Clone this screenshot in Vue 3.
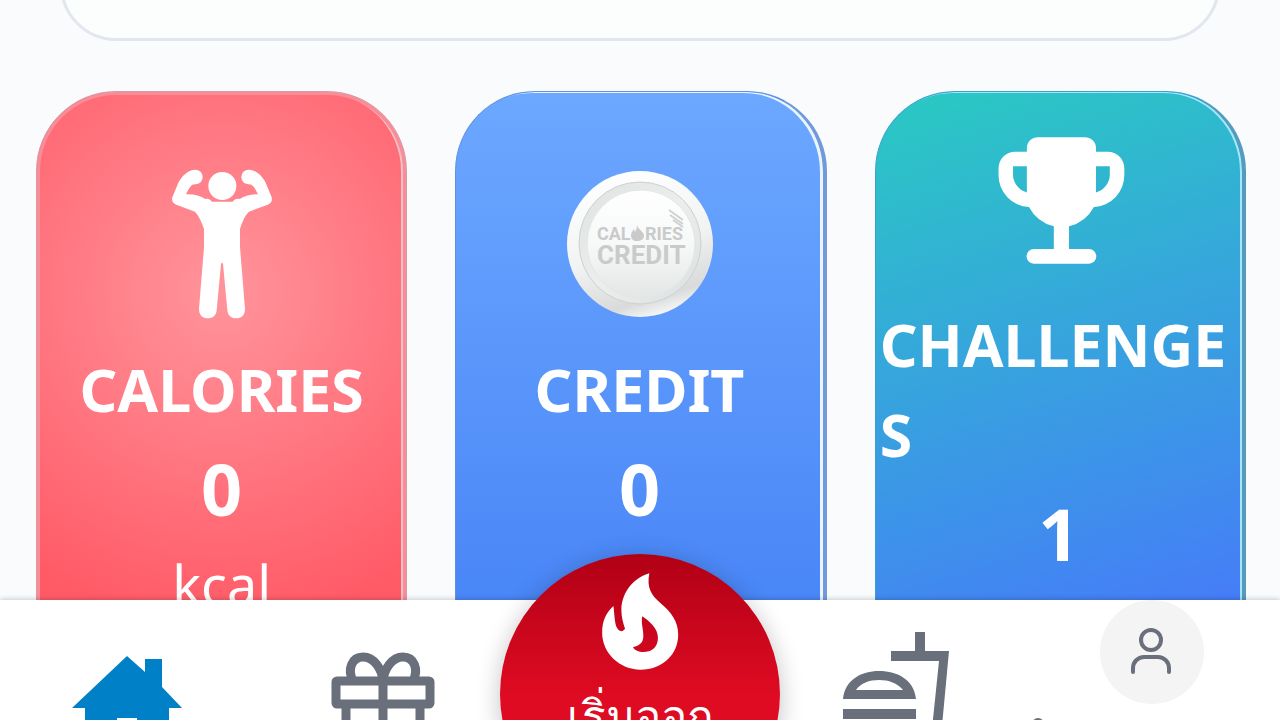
<script setup>
const stats = [
  { key: 'calories', title: 'CALORIES', value: 0, unit: 'kcal' },
  { key: 'credit', title: 'CREDIT', value: 0, unit: '' },
  { key: 'challenges', title: 'CHALLENGES', value: 1, unit: '' },
]
</script>

<template>
  <div class="app">
    <main class="content">
      <section class="panel" aria-label="Summary"></section>
      <section class="stats">
        <article v-for="s in stats" :key="s.key" class="card" :class="s.key">
          <svg v-if="s.key === 'calories'" class="icon" viewBox="-8 55 450 450" aria-hidden="true">
            <g fill="#fff">
              <circle cx="218" cy="106" r="42" />
              <circle cx="137" cy="79" r="22" />
              <circle cx="297" cy="79" r="22" />
              <path d="M137 57C112 58 96 78 86 96L68 140C65 151 70 158 80 162L136 183C148 196 156 214 163 235V290L148 475C148 493 158 503 175 503C191 503 200 493 201 478L214 340Q217 332 220 340L233 478C234 493 243 503 259 503C276 503 286 493 286 475L271 290V235C278 214 284 196 298 183L354 162C364 158 369 151 366 140L348 96C338 78 322 58 297 57L297 101C307 98 315 110 325 131C304 130 282 138 270 145C260 143 254 146 249 153H187C181 146 176 143 167 145C152 135 132 130 109 131C119 110 127 98 137 101Z" />
            </g>
          </svg>
          <svg v-else-if="s.key === 'credit'" class="icon" viewBox="0 0 150 150" role="img" aria-label="Calories Credit">
            <defs>
              <linearGradient id="rim" x1="0.3" y1="0" x2="0.6" y2="1">
                <stop offset="0" stop-color="#ffffff" />
                <stop offset="0.55" stop-color="#f1f3f3" />
                <stop offset="0.88" stop-color="#d9dbdb" />
                <stop offset="1" stop-color="#f6f7f7" />
              </linearGradient>
              <linearGradient id="ring" x1="0" y1="0" x2="1" y2="1">
                <stop offset="0" stop-color="#dfe2e2" />
                <stop offset="0.5" stop-color="#eceeee" />
                <stop offset="1" stop-color="#dcdfdf" />
              </linearGradient>
              <linearGradient id="face" x1="0" y1="0" x2="0" y2="1">
                <stop offset="0" stop-color="#ffffff" />
                <stop offset="0.5" stop-color="#f7f8f8" />
                <stop offset="1" stop-color="#e4e6e6" />
              </linearGradient>
            </defs>
            <circle cx="76" cy="75" r="73" fill="url(#rim)" />
            <circle cx="76" cy="74" r="61" fill="url(#ring)" stroke="#cdd1d1" stroke-width="1" />
            <circle cx="77" cy="75" r="54" fill="url(#face)" stroke="#e3e6e6" stroke-width="1" />
            <g class="coin-text">
              <text x="33" y="71" font-size="18">CAL</text>
              <text x="81" y="71" font-size="18">RIES</text>
              <text x="33" y="95" font-size="26">CREDIT</text>
            </g>
            <path fill="#c9cbcb" d="M73 56C74 61 80 62 80 67C80 70 77 72 73 72C69 72 67 70 67 66C67 63 69 62 70 60L71 63C72 61 73 59 73 56Z" />
            <path fill="none" stroke="#cfd1d1" stroke-width="2" d="M105 41L119 51M106 46L119 55M109 51L119 58" />
          </svg>
          <svg v-else class="icon" viewBox="0.8 0.1 21.7 21.7" aria-hidden="true">
            <path fill="#fff" d="M8.6 2h6.8a1.6 1.6 0 0 1 1.6 1.6V4.1h1.7a2.4 2.4 0 0 1 2.4 2.4v1a4.6 4.6 0 0 1-4.4 4.6a5.6 5.6 0 0 1-3.6 2.8V18.200h2.9a1.05 1.05 0 0 1 0 2.1H8a1.05 1.05 0 0 1 0-2.1h2.9v-3.300a5.6 5.6 0 0 1-3.6-2.8A4.6 4.6 0 0 1 2.9 7.500v-1a2.400 2.400 0 0 1 2.400-2.400H7v-.5A1.600 1.600 0 0 1 8.600 2ZM5 6.200v1.200a2.700 2.700 0 0 0 2 2.600V6.200ZM17 6.200V10a2.700 2.700 0 0 0 2-2.600V6.200Z" />
          </svg>
          <h2>{{ s.title }}</h2>
          <strong class="value">{{ s.value }}</strong>
          <span class="unit">{{ s.unit }}</span>
        </article>
      </section>
    </main>

    <nav class="nav">
      <a class="item" href="#" aria-label="Home">
        <svg class="nav-icon" viewBox="0 0 128 128" aria-hidden="true">
          <path fill="#0080c6" fill-rule="evenodd" d="M63 26L81 42V29H98V57L118 78H105V128H21V78H8ZM53 88H73V110H53Z" />
        </svg>
      </a>
      <a class="item" href="#" aria-label="Rewards">
        <svg class="nav-icon" viewBox="0 0 128 128" fill="none" stroke="#69707b" stroke-width="9" aria-hidden="true">
          <rect x="16" y="51" width="94" height="23" rx="1" />
          <path d="M63 47V128M26 78V128M100 78V128" />
          <path d="M33 51C27 39 32 27 43 27C54 27 62 39 63 51C64 39 72 27 83 27C94 27 99 39 93 51" />
        </svg>
      </a>
      <div class="item">
        <button class="start" type="button">
          <svg class="flame" viewBox="360 100 234 292" aria-hidden="true">
            <path fill="#fff" fill-rule="evenodd" d="M505 101C445 120 422 170 421 210C421 235 427 252 432 268C424 280 412 276 406 262C400 245 400 220 397 199C374 220 363 245 363 280C363 340 415 391 478 391C545 391 592 345 592 285C592 245 570 218 540 192C510 166 497 145 505 101ZM484 230C505 245 531 265 531 295C531 325 510 338 487 338C473 338 460 333 456 323C475 320 487 310 487 290C488 270 479 250 484 230Z" />
          </svg>
          <span>เริ่มออก</span>
        </button>
      </div>
      <a class="item" href="#" aria-label="Food">
        <svg class="nav-icon" viewBox="0 0 128 128" fill="#69707b" aria-hidden="true">
          <path d="M83 2H93V21H117L107 128H97L107 31H59V21H83Z" />
          <path fill-rule="evenodd" d="M11 69C13 50 29 41 47 41C66 41 82 50 84 69ZM24 60H71C65 53 57 50 47 50C37 50 29 53 24 60Z" />
          <path d="M11 79H84V89H11Z" />
        </svg>
      </a>
      <a class="item profile" href="#" aria-label="Profile">
        <svg class="mark" viewBox="0 0 12 12" aria-hidden="true"><circle cx="6" cy="6" r="6" fill="#69707b" /></svg>
        <span class="avatar">
          <svg viewBox="0 0 48 48" fill="none" stroke="#69707b" stroke-width="4" stroke-linecap="round" aria-hidden="true">
            <circle cx="23" cy="12" r="10" />
            <path d="M5 44V40A11 11 0 0 1 16 29H30A11 11 0 0 1 41 40V44" />
          </svg>
        </span>
      </a>
    </nav>
  </div>
</template>

<style>
body {
  margin: 0;
  overflow: hidden;
}
</style>

<style scoped>
.app {
  height: 100vh;
  display: flex;
  flex-direction: column;
  overflow: hidden;
  background: #f9fbfd;
  font-family: "Noto Sans", "Open Sans", sans-serif;
  color: #fff;
}
.content {
  flex: 1;
  min-height: 0;
  overflow: hidden;
}
.panel {
  box-sizing: border-box;
  height: 112px;
  margin: -71px 60px 50px;
  border: 3px solid #e1e6ef;
  border-radius: 56px;
  background: #fcfdfd;
}
.stats {
  display: grid;
  grid-template-columns: repeat(3, minmax(0, 1fr));
  gap: 48px;
  padding: 0 34px 0 36px;
}
.card {
  box-sizing: border-box;
  display: flex;
  flex-direction: column;
  align-items: center;
  justify-content: center;
  padding: 32px 4px 34px;
  border: 1px solid;
  border-radius: 80px;
}
.calories {
  border-color: #d99aa4;
  background: radial-gradient(circle at 50% 200px, #ff949c 0, #ff5b67 330px);
  box-shadow: inset 0 0 0 3px #f98d97, inset -4px 0 0 1px #f3c0c5;
}
.credit {
  border-color: #5e92e0;
  border-right: 4px solid #7499da;
  background: linear-gradient(#6ca8ff, #4a87f7 500px);
  box-shadow: inset -3px 1px 0 0 #eaf5ff;
}
.challenges {
  border-color: #3d9fd0;
  border-right: 4px solid #559bbd;
  background: linear-gradient(163deg, #29cac2, #3d92ea 62%, #477af9 88%);
  box-shadow: inset -2px 1px 0 0 #a5e6f8;
}
.icon {
  width: 150px;
  height: 150px;
  flex: none;
  margin-bottom: 25px;
}
.coin-text {
  fill: #c9cbcb;
  font-family: Roboto, "Liberation Sans", sans-serif;
  font-weight: 700;
}
h2 {
  max-width: 100%;
  margin: 0;
  font-size: 59px;
  line-height: 90px;
  font-weight: 700;
  overflow-wrap: anywhere;
}
.value {
  font-size: 72px;
  line-height: 108px;
}
.unit {
  min-height: 84px;
  font-size: 54px;
  line-height: 84px;
}
.nav {
  position: relative;
  display: grid;
  grid-template-columns: repeat(5, minmax(0, 1fr));
  height: 120px;
  background: #fff;
  box-shadow: 0 -1px 5px rgba(0, 0, 0, 0.2);
}
.item {
  display: flex;
  justify-content: center;
  align-items: flex-start;
  min-width: 0;
}
.nav-icon {
  width: 128px;
  height: 128px;
  margin-top: 30px;
}
.start {
  flex: none;
  display: flex;
  flex-direction: column;
  align-items: center;
  width: 280px;
  height: 280px;
  margin-top: -46px;
  padding: 19px 0 0;
  border: 0;
  border-radius: 50%;
  background: linear-gradient(#b10015, #de0b22 50%);
  box-shadow: 0 4px 24px rgba(0, 0, 0, 0.24);
  color: #fff;
  font-family: inherit;
  font-size: 44px;
  font-weight: 500;
  line-height: 66px;
}
.flame {
  width: 78px;
  height: 97px;
  margin-bottom: 12px;
}
.profile {
  position: relative;
}
.mark {
  position: absolute;
  left: 8px;
  top: 118px;
  width: 12px;
  height: 12px;
}
.avatar {
  display: flex;
  align-items: center;
  justify-content: center;
  width: 104px;
  height: 104px;
  border-radius: 50%;
  background: #f4f4f4;
}
.avatar svg {
  width: 48px;
  height: 48px;
}
</style>
